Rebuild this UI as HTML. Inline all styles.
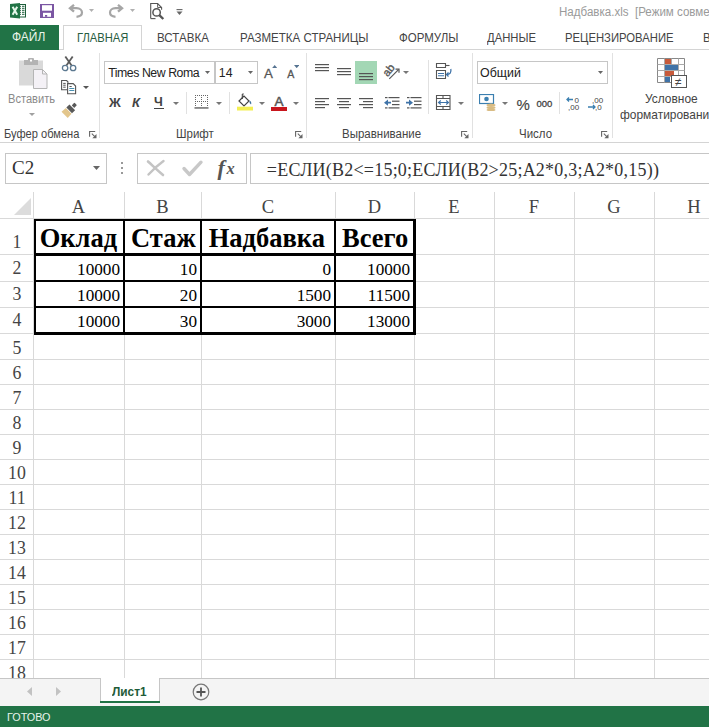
<!DOCTYPE html>
<html><head><meta charset="utf-8"><style>
html,body{margin:0;padding:0;width:709px;height:727px;overflow:hidden;background:#fff;position:relative}
.a{position:absolute;display:block}
.t{position:absolute;line-height:1;white-space:pre}
</style></head><body>
<svg class="a" style="left:10px;top:3px;" width="16" height="16" viewBox="0 0 16 16"><rect x="9.5" y="1.5" width="6" height="12.5" fill="#fff" stroke="#1d5e3a" stroke-width="1"/><path d="M9.5 3.3h1.5M12 3.3h2.5M9.5 5.3h1.5M12 5.3h2.5M9.5 7.3h1.5M12 7.3h2.5M9.5 9.3h1.5M12 9.3h2.5M9.5 11.3h1.5M12 11.3h2.5" stroke="#1d5e3a" stroke-width="1"/><path d="M0 1 L10 0 L10 15.5 L0 14.5Z" fill="#217346"/><path d="M2.6 3.8 L7.2 11.8 M7.2 3.8 L2.6 11.8" stroke="#e6f6ea" stroke-width="2"/></svg>
<svg class="a" style="left:40px;top:4px;" width="14" height="14" viewBox="0 0 14 14"><rect x="0" y="0" width="14" height="14" fill="#7b56a3"/><rect x="2" y="1.2" width="10" height="5.5" fill="#fff"/><rect x="3" y="8.8" width="8" height="4" fill="#fff"/><rect x="5" y="11" width="2.2" height="1.8" fill="#7b56a3"/></svg>
<svg class="a" style="left:66px;top:2px;" width="20" height="18" viewBox="0 0 20 18"><path d="M8 2.8 L4 6.2 L8 9.6" fill="none" stroke="#a6a6a6" stroke-width="2.4"/><path d="M4.5 6.2 H10.5 C14 6.2 16 8.2 16 10.5 C16 12.8 14 14.5 10.5 14.8" fill="none" stroke="#a6a6a6" stroke-width="2.2"/></svg>
<svg class="a" style="left:89px;top:9px;" width="5" height="3" viewBox="0 0 5 3"><path d="M0 0h5l-2.5 3z" fill="#b0b0b0"/></svg>
<svg class="a" style="left:106px;top:2px;" width="20" height="18" viewBox="0 0 20 18"><g transform="translate(20 0) scale(-1 1)"><path d="M8 2.8 L4 6.2 L8 9.6" fill="none" stroke="#a6a6a6" stroke-width="2.4"/><path d="M4.5 6.2 H10.5 C14 6.2 16 8.2 16 10.5 C16 12.8 14 14.5 10.5 14.8" fill="none" stroke="#a6a6a6" stroke-width="2.2"/></g></svg>
<svg class="a" style="left:130px;top:9px;" width="5" height="3" viewBox="0 0 5 3"><path d="M0 0h5l-2.5 3z" fill="#b0b0b0"/></svg>
<svg class="a" style="left:149px;top:2px;" width="17" height="18" viewBox="0 0 17 18"><path d="M1.7 16.6 V1.5 H8.6 L12.6 5.5 V7.8" fill="none" stroke="#555" stroke-width="1.1"/><path d="M1.7 16.6 H6.5" stroke="#555" stroke-width="1.1"/><path d="M8.6 1.5 V5.5 H12.6" fill="none" stroke="#555" stroke-width="0.9"/><circle cx="7.6" cy="10.4" r="3.7" fill="none" stroke="#555" stroke-width="1.5"/><path d="M10.3 13.1 L14.3 17" stroke="#555" stroke-width="2.3"/></svg>
<svg class="a" style="left:176px;top:8px;" width="7" height="8" viewBox="0 0 7 8"><path d="M0.5 1.6h6" stroke="#666" stroke-width="1.1"/><path d="M0.5 3.6h6l-3 3.4z" fill="#666"/></svg>
<div class="t" style="left:558.6px;top:6.35px;font-size:12.3px;font-family:'Liberation Sans',sans-serif;color:#9a9a9a;font-weight:normal;transform:scaleX(0.94);transform-origin:0 0;">Надбавка.xls&nbsp; [Режим совместимости] - Excel</div>
<div class="a" style="left:0px;top:49px;width:709px;height:1px;background:#d4d4d4"></div>
<div class="a" style="left:0px;top:25px;width:59px;height:25px;background:#217346"></div>
<div class="t" style="left:12.2px;top:31.48px;font-size:12.96px;font-family:'Liberation Sans',sans-serif;color:#eaf5ea;font-weight:normal;transform:scaleX(0.926);transform-origin:0 0;">ФАЙЛ</div>
<div class="a" style="left:63px;top:25px;width:79px;height:25px;background:#fff;border:1px solid #d4d4d4;border-bottom:none;box-sizing:border-box"></div>
<div class="t" style="left:77px;top:32.22px;font-size:12.1px;font-family:'Liberation Sans',sans-serif;color:#275c3e;font-weight:normal;transform:scaleX(0.926);transform-origin:0 0;">ГЛАВНАЯ</div>
<div class="t" style="left:157.4px;top:31.85px;font-size:12.53px;font-family:'Liberation Sans',sans-serif;color:#444;font-weight:normal;transform:scaleX(0.926);transform-origin:0 0;">ВСТАВКА</div>
<div class="t" style="left:239.7px;top:31.90px;font-size:12.47px;font-family:'Liberation Sans',sans-serif;color:#444;font-weight:normal;transform:scaleX(0.926);transform-origin:0 0;">РАЗМЕТКА СТРАНИЦЫ</div>
<div class="t" style="left:398.6px;top:31.94px;font-size:12.42px;font-family:'Liberation Sans',sans-serif;color:#444;font-weight:normal;transform:scaleX(0.926);transform-origin:0 0;">ФОРМУЛЫ</div>
<div class="t" style="left:486.7px;top:32.13px;font-size:12.2px;font-family:'Liberation Sans',sans-serif;color:#444;font-weight:normal;transform:scaleX(0.926);transform-origin:0 0;">ДАННЫЕ</div>
<div class="t" style="left:564.7px;top:32.13px;font-size:12.2px;font-family:'Liberation Sans',sans-serif;color:#444;font-weight:normal;transform:scaleX(0.926);transform-origin:0 0;">РЕЦЕНЗИРОВАНИЕ</div>
<div class="t" style="left:702.5px;top:31.94px;font-size:12.42px;font-family:'Liberation Sans',sans-serif;color:#444;font-weight:normal;transform:scaleX(0.926);transform-origin:0 0;">ВИД</div>
<div class="a" style="left:0px;top:142px;width:709px;height:1px;background:#d4d4d4"></div>
<div class="a" style="left:99px;top:53px;width:1px;height:85px;background:#e1e1e1"></div>
<div class="a" style="left:306px;top:53px;width:1px;height:85px;background:#e1e1e1"></div>
<div class="a" style="left:472px;top:53px;width:1px;height:85px;background:#e1e1e1"></div>
<div class="a" style="left:612px;top:53px;width:1px;height:85px;background:#e1e1e1"></div>
<div class="t" style="left:3.5px;top:128.41px;font-size:11.99px;font-family:'Liberation Sans',sans-serif;color:#444;font-weight:normal;transform:scaleX(0.926);transform-origin:0 0;">Буфер обмена</div>
<div class="t" style="left:175.8px;top:128.04px;font-size:12.42px;font-family:'Liberation Sans',sans-serif;color:#444;font-weight:normal;transform:scaleX(0.926);transform-origin:0 0;">Шрифт</div>
<div class="t" style="left:341.6px;top:128.04px;font-size:12.42px;font-family:'Liberation Sans',sans-serif;color:#444;font-weight:normal;transform:scaleX(0.926);transform-origin:0 0;">Выравнивание</div>
<div class="t" style="left:518.6px;top:128.04px;font-size:12.42px;font-family:'Liberation Sans',sans-serif;color:#444;font-weight:normal;transform:scaleX(0.926);transform-origin:0 0;">Число</div>
<svg class="a" style="left:89px;top:130px;" width="8" height="9" viewBox="0 0 8 9"><path d="M0.6 6.8 V1.5 H6.2" fill="none" stroke="#666" stroke-width="1.1"/><path d="M7.5 4 V8.2 H3.3 Z" fill="#666"/><path d="M2.8 3.6 L5.8 6.6" stroke="#666" stroke-width="1.1"/></svg>
<svg class="a" style="left:295px;top:130px;" width="8" height="9" viewBox="0 0 8 9"><path d="M0.6 6.8 V1.5 H6.2" fill="none" stroke="#666" stroke-width="1.1"/><path d="M7.5 4 V8.2 H3.3 Z" fill="#666"/><path d="M2.8 3.6 L5.8 6.6" stroke="#666" stroke-width="1.1"/></svg>
<svg class="a" style="left:461px;top:130px;" width="8" height="9" viewBox="0 0 8 9"><path d="M0.6 6.8 V1.5 H6.2" fill="none" stroke="#666" stroke-width="1.1"/><path d="M7.5 4 V8.2 H3.3 Z" fill="#666"/><path d="M2.8 3.6 L5.8 6.6" stroke="#666" stroke-width="1.1"/></svg>
<svg class="a" style="left:601px;top:130px;" width="8" height="9" viewBox="0 0 8 9"><path d="M0.6 6.8 V1.5 H6.2" fill="none" stroke="#666" stroke-width="1.1"/><path d="M7.5 4 V8.2 H3.3 Z" fill="#666"/><path d="M2.8 3.6 L5.8 6.6" stroke="#666" stroke-width="1.1"/></svg>
<svg class="a" style="left:18px;top:57px;" width="31" height="32" viewBox="0 0 31 32"><rect x="1" y="3.5" width="24" height="25" fill="#d9d9d9"/><rect x="6" y="3" width="14" height="5" fill="#b3b3b3"/><rect x="10" y="1" width="6" height="4" rx="1" fill="#b3b3b3"/><rect x="12" y="2.5" width="2" height="2" fill="#fff"/><path d="M15.5 12.5h9l4.5 4.5v14.5h-13.5z" fill="#f4f1f6" stroke="#b5b5b5" stroke-width="1"/><path d="M24.5 12.5v4.5h4.5" fill="none" stroke="#b5b5b5"/></svg>
<div class="t" style="left:7.6px;top:92.80px;font-size:12px;font-family:'Liberation Sans',sans-serif;color:#8a8a8a;font-weight:normal;transform:scaleX(0.926);transform-origin:0 0;">Вставить</div>
<svg class="a" style="left:29px;top:113px;" width="6" height="3" viewBox="0 0 6 3"><path d="M0 0h6l-3 3z" fill="#a0a0a0"/></svg>
<svg class="a" style="left:61px;top:56px;" width="16" height="16" viewBox="0 0 16 16"><path d="M4.3 0.6 L10.6 9.6" stroke="#5b5b5b" stroke-width="1.8"/><path d="M11.7 0.6 L5.4 9.6" stroke="#5b5b5b" stroke-width="1.8"/><circle cx="4.1" cy="12" r="2.7" fill="none" stroke="#5b7890" stroke-width="1.3"/><circle cx="12.1" cy="12" r="2.7" fill="none" stroke="#5b7890" stroke-width="1.3"/></svg>
<svg class="a" style="left:60px;top:79px;" width="17" height="16" viewBox="0 0 17 16"><path d="M1.6 1.5h5l1.3 1.3v8h-6.3z" fill="#fff" stroke="#555" stroke-width="1.1"/><path d="M3.2 4.4h2.5M3.2 6.2h2.5M3.2 8.2h2.5" stroke="#555" stroke-width="1"/><path d="M7.6 4.6h5.6l2.4 2.4v7.8h-8z" fill="#fff" stroke="#555" stroke-width="1.1"/><path d="M9.5 7.5h2.2" stroke="#555" stroke-width="1"/><path d="M9.3 9.5h5M9.3 11.5h5" stroke="#4a8fb0" stroke-width="1.1"/></svg>
<svg class="a" style="left:83px;top:86px;" width="6" height="3" viewBox="0 0 6 3"><path d="M0 0h6l-3 3z" fill="#555"/></svg>
<svg class="a" style="left:56px;top:98px;" width="28" height="22" viewBox="0 0 28 22"><g transform="translate(13.6 12) rotate(45)"><rect x="-1.8" y="-8.6" width="3.6" height="3.8" rx="0.6" fill="#595959"/><rect x="-4" y="-3.8" width="8" height="4.4" fill="#595959"/><path d="M-4 1.3 H4 L4.4 7 H-4.4Z" fill="#e3c68c"/></g></svg>
<div class="a" style="left:104px;top:61px;width:111px;height:23px;border:1px solid #c6c6c6;box-sizing:border-box;background:#fff"></div>
<div class="a" style="left:215px;top:61px;width:43px;height:23px;border:1px solid #c6c6c6;box-sizing:border-box;background:#fff"></div>
<div class="t" style="left:108.2px;top:66.55px;font-size:12.3px;font-family:'Liberation Sans',sans-serif;color:#222;font-weight:normal;letter-spacing:-0.45px;">Times New Roma</div>
<div class="t" style="left:218.8px;top:66.55px;font-size:12.3px;font-family:'Liberation Sans',sans-serif;color:#222;font-weight:normal;">14</div>
<svg class="a" style="left:205px;top:71px;" width="5" height="3" viewBox="0 0 5 3"><path d="M0 0h5l-2.5 3z" fill="#666"/></svg>
<svg class="a" style="left:248px;top:71px;" width="5" height="3" viewBox="0 0 5 3"><path d="M0 0h5l-2.5 3z" fill="#666"/></svg>
<div class="t" style="left:264px;top:66.90px;font-size:13.3px;font-family:'Liberation Sans',sans-serif;color:#555;font-weight:normal;-webkit-text-stroke:0.3px #555;">A</div>
<svg class="a" style="left:271.8px;top:64.5px;" width="5.4" height="3.2" viewBox="0 0 5.4 3.2"><path d="M0 3.2h5.4l-2.7-3.2z" fill="#557391"/></svg>
<div class="t" style="left:287.2px;top:68.99px;font-size:10.6px;font-family:'Liberation Sans',sans-serif;color:#555;font-weight:normal;-webkit-text-stroke:0.3px #555;">A</div>
<svg class="a" style="left:293.8px;top:64.8px;" width="5.4" height="3.2" viewBox="0 0 5.4 3.2"><path d="M0 0h5.4l-2.7 3.2z" fill="#557391"/></svg>
<div class="t" style="left:109px;top:96.35px;font-size:13px;font-family:'Liberation Sans',sans-serif;color:#444;font-weight:bold;">Ж</div>
<div class="t" style="left:132px;top:96.35px;font-size:13px;font-family:'Liberation Sans',sans-serif;color:#444;font-weight:bold;font-style:italic;">К</div>
<div class="t" style="left:154px;top:95.58px;font-size:12.5px;font-family:'Liberation Sans',sans-serif;color:#444;font-weight:bold;">Ч</div>
<div class="a" style="left:154px;top:108px;width:10px;height:1.3px;background:#444"></div>
<svg class="a" style="left:173px;top:102px;" width="6" height="3" viewBox="0 0 6 3"><path d="M0 0h6l-3 3z" fill="#777"/></svg>
<div class="a" style="left:186px;top:92px;width:1px;height:22px;background:#e1e1e1"></div>
<svg class="a" style="left:194px;top:94px;" width="15" height="16" viewBox="0 0 15 16"><g fill="#666"><rect x="1" y="1" width="1" height="1"/><rect x="3" y="1" width="1" height="1"/><rect x="5" y="1" width="1" height="1"/><rect x="7" y="1" width="1" height="1"/><rect x="9" y="1" width="1" height="1"/><rect x="11" y="1" width="1" height="1"/><rect x="13" y="1" width="1" height="1"/><rect x="1" y="7" width="1" height="1"/><rect x="3" y="7" width="1" height="1"/><rect x="5" y="7" width="1" height="1"/><rect x="7" y="7" width="1" height="1"/><rect x="9" y="7" width="1" height="1"/><rect x="11" y="7" width="1" height="1"/><rect x="13" y="7" width="1" height="1"/><rect x="1" y="3" width="1" height="1"/><rect x="1" y="5" width="1" height="1"/><rect x="1" y="9" width="1" height="1"/><rect x="1" y="11" width="1" height="1"/><rect x="7" y="3" width="1" height="1"/><rect x="7" y="5" width="1" height="1"/><rect x="7" y="9" width="1" height="1"/><rect x="7" y="11" width="1" height="1"/><rect x="13" y="3" width="1" height="1"/><rect x="13" y="5" width="1" height="1"/><rect x="13" y="9" width="1" height="1"/><rect x="13" y="11" width="1" height="1"/></g><rect x="0.5" y="13.3" width="14" height="1.3" fill="#555"/></svg>
<svg class="a" style="left:216px;top:102px;" width="6" height="3" viewBox="0 0 6 3"><path d="M0 0h6l-3 3z" fill="#777"/></svg>
<div class="a" style="left:229px;top:92px;width:1px;height:22px;background:#e1e1e1"></div>
<svg class="a" style="left:236px;top:93px;" width="18" height="18" viewBox="0 0 18 18"><path d="M8 3 L3 8 L8 13 L13 8 Z" fill="#fff" stroke="#444" stroke-width="1.2"/><path d="M6.3 1 V6" stroke="#444" stroke-width="1.1"/><path d="M6.3 1 h1.5" stroke="#444" stroke-width="1"/><path d="M13.5 7.5 q2.5 1.5 1.5 4 q-2 -1 -1.5 -4z" fill="#3b6f9a"/><rect x="1" y="13.7" width="16" height="3.8" fill="#f3ef52"/></svg>
<svg class="a" style="left:259px;top:102px;" width="6" height="3" viewBox="0 0 6 3"><path d="M0 0h6l-3 3z" fill="#777"/></svg>
<div class="t" style="left:274.6px;top:95.33px;font-size:13.5px;font-family:'Liberation Sans',sans-serif;color:#555;font-weight:normal;-webkit-text-stroke:0.5px #555;">A</div>
<div class="a" style="left:271px;top:106.7px;width:16px;height:4px;background:#c8161d"></div>
<svg class="a" style="left:293px;top:102px;" width="6" height="3" viewBox="0 0 6 3"><path d="M0 0h6l-3 3z" fill="#777"/></svg>
<svg class="a" style="left:315px;top:64px;" width="16" height="11" viewBox="0 0 16 11"><rect x="0" y="0" width="14" height="1.2" fill="#555"/><rect x="0" y="3" width="14" height="1.2" fill="#555"/><rect x="0" y="6" width="14" height="1.2" fill="#555"/></svg>
<svg class="a" style="left:337px;top:68px;" width="16" height="11" viewBox="0 0 16 11"><rect x="0" y="0" width="14" height="1.2" fill="#555"/><rect x="0" y="3" width="14" height="1.2" fill="#555"/><rect x="0" y="6" width="14" height="1.2" fill="#555"/></svg>
<div class="a" style="left:355px;top:61px;width:22px;height:23px;background:#a3d7b5"></div>
<svg class="a" style="left:359px;top:73px;" width="16" height="11" viewBox="0 0 16 11"><rect x="0" y="0" width="14" height="1.2" fill="#555"/><rect x="0" y="3" width="14" height="1.2" fill="#555"/><rect x="0" y="6" width="14" height="1.2" fill="#555"/></svg>
<svg class="a" style="left:381px;top:61px;" width="22" height="20" viewBox="0 0 22 20"><text x="0" y="0" font-family="Liberation Sans" font-size="11" fill="#555" stroke="#555" stroke-width="0.35" transform="translate(6.8 16.2) rotate(-52)">ab</text><path d="M8.3 17.8 L17.5 8.6" stroke="#555" stroke-width="1.2"/><path d="M14.5 8.2 H18 V11.7" fill="none" stroke="#555" stroke-width="1.2"/></svg>
<svg class="a" style="left:403px;top:71px;" width="6" height="3" viewBox="0 0 6 3"><path d="M0 0h6l-3 3z" fill="#777"/></svg>
<svg class="a" style="left:315px;top:98px;" width="16" height="14" viewBox="0 0 16 14"><rect x="0" y="0" width="14" height="1.2" fill="#555"/><rect x="0" y="3" width="10" height="1.2" fill="#555"/><rect x="0" y="6" width="14" height="1.2" fill="#555"/><rect x="0" y="9" width="10" height="1.2" fill="#555"/></svg>
<svg class="a" style="left:337px;top:98px;" width="16" height="14" viewBox="0 0 16 14"><rect x="0" y="0" width="14" height="1.2" fill="#555"/><rect x="2" y="3" width="10" height="1.2" fill="#555"/><rect x="0" y="6" width="14" height="1.2" fill="#555"/><rect x="2" y="9" width="10" height="1.2" fill="#555"/></svg>
<svg class="a" style="left:359px;top:98px;" width="16" height="14" viewBox="0 0 16 14"><rect x="0" y="0" width="14" height="1.2" fill="#555"/><rect x="4" y="3" width="10" height="1.2" fill="#555"/><rect x="0" y="6" width="14" height="1.2" fill="#555"/><rect x="4" y="9" width="10" height="1.2" fill="#555"/></svg>
<svg class="a" style="left:383px;top:96px;" width="18" height="13" viewBox="0 0 18 13"><g fill="#555"><rect x="2" y="1" width="2.5" height="1.2"/><rect x="5.5" y="1" width="11" height="1.2"/><rect x="9" y="4.6" width="7.5" height="1.2"/><rect x="9" y="8" width="7.5" height="1.2"/><rect x="2" y="11.3" width="2.5" height="1.2"/><rect x="5.5" y="11.3" width="11" height="1.2"/></g><path d="M1 6.7 L5 3.6 V5.8 H8 V7.6 H5 V9.8Z" fill="#3f73a8"/></svg>
<svg class="a" style="left:405px;top:96px;" width="18" height="13" viewBox="0 0 18 13"><g fill="#555"><rect x="2" y="1" width="2.5" height="1.2"/><rect x="5.5" y="1" width="11" height="1.2"/><rect x="9" y="4.6" width="7.5" height="1.2"/><rect x="9" y="8" width="7.5" height="1.2"/><rect x="2" y="11.3" width="2.5" height="1.2"/><rect x="5.5" y="11.3" width="11" height="1.2"/></g><path d="M8 6.7 L4 3.6 V5.8 H1 V7.6 H4 V9.8Z" fill="#3f73a8"/></svg>
<div class="a" style="left:428px;top:60px;width:1px;height:54px;background:#e1e1e1"></div>
<svg class="a" style="left:434px;top:62px;" width="20" height="18" viewBox="0 0 20 18"><path d="M2.5 1.5h9v4h-9z" fill="none" stroke="#555" stroke-width="1.1"/><path d="M11.5 3.5h4" stroke="#555" stroke-width="1.1"/><path d="M2.5 8.5h9v8h-9z" fill="none" stroke="#555" stroke-width="1.1"/><path d="M4 11.5h6M4 13.8h6" stroke="#3f73a8" stroke-width="1.1"/><path d="M16.8 7 C17.5 10.5 16 12.5 12.5 12.5 M14.5 10.5 L12.5 12.5 L14.5 14.5" fill="none" stroke="#3f73a8" stroke-width="1.3"/></svg>
<svg class="a" style="left:435px;top:94px;" width="17" height="17" viewBox="0 0 17 17"><path d="M1.5 1.5h13.5v14h-13.5z" fill="none" stroke="#555" stroke-width="1.1"/><path d="M1.5 4.5h13.5M1.5 12.5h13.5M8 1.5v3M8 12.5v3" stroke="#555" stroke-width="1.1"/><path d="M3.5 8.5h10M5.8 6.5l-2.3 2 2.3 2M11.2 6.5l2.3 2-2.3 2" fill="none" stroke="#3f73a8" stroke-width="1.1"/></svg>
<svg class="a" style="left:458px;top:102px;" width="6" height="3" viewBox="0 0 6 3"><path d="M0 0h6l-3 3z" fill="#777"/></svg>
<div class="t" style="left:461px;top:-0.85px;font-size:1px;font-family:'Liberation Sans',sans-serif;color:#444;font-weight:normal;"></div>
<div class="a" style="left:477px;top:61px;width:131px;height:23px;border:1px solid #c6c6c6;box-sizing:border-box;background:#fff"></div>
<div class="t" style="left:480.4px;top:65.61px;font-size:13.4px;font-family:'Liberation Sans',sans-serif;color:#222;font-weight:normal;transform:scaleX(0.926);transform-origin:0 0;">Общий</div>
<svg class="a" style="left:598px;top:71px;" width="5" height="3" viewBox="0 0 5 3"><path d="M0 0h5l-2.5 3z" fill="#666"/></svg>
<svg class="a" style="left:479px;top:94px;" width="18" height="17" viewBox="0 0 18 17"><rect x=".5" y=".5" width="14" height="9" fill="#fff" stroke="#3b7fb0" stroke-width="1.2"/><circle cx="7.5" cy="5" r="2.3" fill="#3b7fb0"/><ellipse cx="12" cy="11" rx="4.5" ry="1.6" fill="#d9bc84"/><ellipse cx="12" cy="13.5" rx="4.5" ry="1.6" fill="#d9bc84"/><ellipse cx="12" cy="16" rx="4.5" ry="1.2" fill="#d9bc84"/></svg>
<svg class="a" style="left:502px;top:102px;" width="6" height="3" viewBox="0 0 6 3"><path d="M0 0h6l-3 3z" fill="#777"/></svg>
<div class="t" style="left:516.5px;top:96.85px;font-size:15px;font-family:'Liberation Sans',sans-serif;color:#444;font-weight:normal;-webkit-text-stroke:0.15px #444;">%</div>
<div class="t" style="left:536.5px;top:98.52px;font-size:9.5px;font-family:'Liberation Sans',sans-serif;color:#444;font-weight:normal;-webkit-text-stroke:0.3px #444;">000</div>
<div class="a" style="left:559px;top:92px;width:1px;height:22px;background:#e1e1e1"></div>
<svg class="a" style="left:566px;top:96px;" width="16" height="15" viewBox="0 0 16 15"><path d="M7 3.5H1 M3 1.5L1 3.5 3 5.5" fill="none" stroke="#3b7fb0" stroke-width="1.3"/><text x="8.5" y="7" font-family="Liberation Sans" font-size="8" fill="#444">0</text><text x="2" y="14" font-family="Liberation Sans" font-size="8" fill="#444">,00</text></svg>
<svg class="a" style="left:588px;top:96px;" width="16" height="15" viewBox="0 0 16 15"><text x="4" y="7" font-family="Liberation Sans" font-size="8" fill="#444">,00</text><path d="M0 11H7 M5 9L7 11 5 13" fill="none" stroke="#3b7fb0" stroke-width="1.3"/><text x="7" y="14" font-family="Liberation Sans" font-size="8" fill="#444">,0</text></svg>
<svg class="a" style="left:656px;top:57px;" width="32" height="32" viewBox="0 0 32 32"><path d="M1.5 1.5h27v24h-27z" fill="#fff" stroke="#888"/><path d="M1.5 7.5h27M1.5 13.5h27M1.5 19.5h27M8.5 1.5v24M15.5 1.5v24M22.5 1.5v24" stroke="#aaa"/><rect x="9" y="2" width="6" height="5" fill="#c85a3a"/><rect x="9" y="8" width="13" height="5" fill="#3f73a8"/><rect x="9" y="14" width="9" height="5" fill="#c85a3a"/><rect x="9" y="20" width="5" height="5" fill="#3f73a8"/><rect x="15.5" y="18.5" width="15" height="12" fill="#fff" stroke="#555"/><text x="19" y="29" font-family="Liberation Sans" font-size="12" fill="#444">≠</text></svg>
<div class="t" style="left:645.4px;top:92.83px;font-size:12.9px;font-family:'Liberation Sans',sans-serif;color:#444;font-weight:normal;transform:scaleX(0.926);transform-origin:0 0;">Условное</div>
<div class="t" style="left:620px;top:109.03px;font-size:12.9px;font-family:'Liberation Sans',sans-serif;color:#444;font-weight:normal;transform:scaleX(0.926);transform-origin:0 0;">форматировани</div>
<div class="a" style="left:5px;top:153px;width:102px;height:31px;border:1px solid #c6c6c6;box-sizing:border-box;background:#fff"></div>
<div class="t" style="left:12px;top:157.83px;font-size:19px;font-family:'Liberation Serif',serif;color:#333;font-weight:normal;">C2</div>
<svg class="a" style="left:93px;top:166px;" width="7" height="4" viewBox="0 0 7 4"><path d="M0 0h7l-3.5 4z" fill="#666"/></svg>
<div class="a" style="left:121px;top:162px;width:2px;height:2px;background:#999"></div>
<div class="a" style="left:121px;top:167px;width:2px;height:2px;background:#999"></div>
<div class="a" style="left:121px;top:172px;width:2px;height:2px;background:#999"></div>
<div class="a" style="left:137px;top:153px;width:110px;height:31px;border:1px solid #c6c6c6;box-sizing:border-box;background:#fff"></div>
<svg class="a" style="left:145px;top:158px;" width="22" height="20" viewBox="0 0 22 20"><path d="M3 3.5 C8 8 12 12 18 17" fill="none" stroke="#c4c4c4" stroke-width="2.6" stroke-linecap="round"/><path d="M18.5 3 C13 7 8 11.5 3.5 16.5" fill="none" stroke="#c4c4c4" stroke-width="2.4" stroke-linecap="round"/></svg>
<svg class="a" style="left:181px;top:159px;" width="23" height="19" viewBox="0 0 23 19"><path d="M3 9.5 L8.5 15.5 L20 3.2" fill="none" stroke="#c8c8c8" stroke-width="3.4" stroke-linejoin="round" stroke-linecap="round"/></svg>
<div class="t" style="left:217.5px;top:157.24px;font-size:22px;font-family:'Liberation Serif',serif;color:#555;font-weight:bold;font-style:italic;">f</div>
<div class="t" style="left:226.5px;top:160.50px;font-size:16.5px;font-family:'Liberation Serif',serif;color:#555;font-weight:bold;font-style:italic;">x</div>
<div class="a" style="left:250px;top:153px;width:470px;height:31px;border:1px solid #c6c6c6;box-sizing:border-box;background:#fff"></div>
<div class="t" style="left:266.8px;top:160.86px;font-size:18px;font-family:'Liberation Serif',serif;color:#333;font-weight:normal;letter-spacing:0.22px;">=ЕСЛИ(B2&lt;=15;0;ЕСЛИ(B2&gt;25;A2*0,3;A2*0,15))</div>
<div class="a" style="left:33px;top:192px;width:1px;height:486px;background:#d9d9d9"></div>
<div class="a" style="left:124px;top:192px;width:1px;height:486px;background:#d9d9d9"></div>
<div class="a" style="left:201px;top:192px;width:1px;height:486px;background:#d9d9d9"></div>
<div class="a" style="left:335px;top:192px;width:1px;height:486px;background:#d9d9d9"></div>
<div class="a" style="left:414px;top:192px;width:1px;height:486px;background:#d9d9d9"></div>
<div class="a" style="left:494px;top:192px;width:1px;height:486px;background:#d9d9d9"></div>
<div class="a" style="left:574px;top:192px;width:1px;height:486px;background:#d9d9d9"></div>
<div class="a" style="left:654px;top:192px;width:1px;height:486px;background:#d9d9d9"></div>
<div class="a" style="left:0px;top:218px;width:709px;height:1px;background:#d9d9d9"></div>
<div class="a" style="left:0px;top:254px;width:709px;height:1px;background:#d9d9d9"></div>
<div class="a" style="left:0px;top:281px;width:709px;height:1px;background:#d9d9d9"></div>
<div class="a" style="left:0px;top:307px;width:709px;height:1px;background:#d9d9d9"></div>
<div class="a" style="left:0px;top:333px;width:709px;height:1px;background:#d9d9d9"></div>
<div class="a" style="left:0px;top:359px;width:709px;height:1px;background:#d9d9d9"></div>
<div class="a" style="left:0px;top:384px;width:709px;height:1px;background:#d9d9d9"></div>
<div class="a" style="left:0px;top:409px;width:709px;height:1px;background:#d9d9d9"></div>
<div class="a" style="left:0px;top:434px;width:709px;height:1px;background:#d9d9d9"></div>
<div class="a" style="left:0px;top:459px;width:709px;height:1px;background:#d9d9d9"></div>
<div class="a" style="left:0px;top:484px;width:709px;height:1px;background:#d9d9d9"></div>
<div class="a" style="left:0px;top:509px;width:709px;height:1px;background:#d9d9d9"></div>
<div class="a" style="left:0px;top:534px;width:709px;height:1px;background:#d9d9d9"></div>
<div class="a" style="left:0px;top:559px;width:709px;height:1px;background:#d9d9d9"></div>
<div class="a" style="left:0px;top:584px;width:709px;height:1px;background:#d9d9d9"></div>
<div class="a" style="left:0px;top:609px;width:709px;height:1px;background:#d9d9d9"></div>
<div class="a" style="left:0px;top:634px;width:709px;height:1px;background:#d9d9d9"></div>
<div class="a" style="left:0px;top:659px;width:709px;height:1px;background:#d9d9d9"></div>
<svg class="a" style="left:14px;top:198px;" width="17" height="17" viewBox="0 0 17 17"><path d="M17 0 V17 H0 Z" fill="#dcdcdc"/></svg>
<div class="t" style="left:33px;width:91px;text-align:center;top:198.25px;font-size:18.5px;font-family:'Liberation Serif',serif;color:#444">A</div>
<div class="t" style="left:124px;width:77px;text-align:center;top:198.25px;font-size:18.5px;font-family:'Liberation Serif',serif;color:#444">B</div>
<div class="t" style="left:201px;width:134px;text-align:center;top:198.25px;font-size:18.5px;font-family:'Liberation Serif',serif;color:#444">C</div>
<div class="t" style="left:335px;width:79px;text-align:center;top:198.25px;font-size:18.5px;font-family:'Liberation Serif',serif;color:#444">D</div>
<div class="t" style="left:414px;width:80px;text-align:center;top:198.25px;font-size:18.5px;font-family:'Liberation Serif',serif;color:#444">E</div>
<div class="t" style="left:494px;width:80px;text-align:center;top:198.25px;font-size:18.5px;font-family:'Liberation Serif',serif;color:#444">F</div>
<div class="t" style="left:574px;width:80px;text-align:center;top:198.25px;font-size:18.5px;font-family:'Liberation Serif',serif;color:#444">G</div>
<div class="t" style="left:654px;width:80px;text-align:center;top:198.25px;font-size:18.5px;font-family:'Liberation Serif',serif;color:#444">H</div>
<div class="t" style="left:0px;width:34px;text-align:center;top:233.63px;font-size:17.8px;font-family:'Liberation Serif',serif;color:#444">1</div>
<div class="t" style="left:0px;width:34px;text-align:center;top:260.33px;font-size:17.8px;font-family:'Liberation Serif',serif;color:#444">2</div>
<div class="t" style="left:0px;width:34px;text-align:center;top:286.33px;font-size:17.8px;font-family:'Liberation Serif',serif;color:#444">3</div>
<div class="t" style="left:0px;width:34px;text-align:center;top:312.33px;font-size:17.8px;font-family:'Liberation Serif',serif;color:#444">4</div>
<div class="t" style="left:0px;width:34px;text-align:center;top:339.53px;font-size:17.8px;font-family:'Liberation Serif',serif;color:#444">5</div>
<div class="t" style="left:0px;width:34px;text-align:center;top:364.53px;font-size:17.8px;font-family:'Liberation Serif',serif;color:#444">6</div>
<div class="t" style="left:0px;width:34px;text-align:center;top:389.53px;font-size:17.8px;font-family:'Liberation Serif',serif;color:#444">7</div>
<div class="t" style="left:0px;width:34px;text-align:center;top:414.53px;font-size:17.8px;font-family:'Liberation Serif',serif;color:#444">8</div>
<div class="t" style="left:0px;width:34px;text-align:center;top:439.53px;font-size:17.8px;font-family:'Liberation Serif',serif;color:#444">9</div>
<div class="t" style="left:0px;width:34px;text-align:center;top:464.53px;font-size:17.8px;font-family:'Liberation Serif',serif;color:#444">10</div>
<div class="t" style="left:0px;width:34px;text-align:center;top:489.53px;font-size:17.8px;font-family:'Liberation Serif',serif;color:#444">11</div>
<div class="t" style="left:0px;width:34px;text-align:center;top:514.53px;font-size:17.8px;font-family:'Liberation Serif',serif;color:#444">12</div>
<div class="t" style="left:0px;width:34px;text-align:center;top:539.53px;font-size:17.8px;font-family:'Liberation Serif',serif;color:#444">13</div>
<div class="t" style="left:0px;width:34px;text-align:center;top:564.53px;font-size:17.8px;font-family:'Liberation Serif',serif;color:#444">14</div>
<div class="t" style="left:0px;width:34px;text-align:center;top:589.53px;font-size:17.8px;font-family:'Liberation Serif',serif;color:#444">15</div>
<div class="t" style="left:0px;width:34px;text-align:center;top:614.53px;font-size:17.8px;font-family:'Liberation Serif',serif;color:#444">16</div>
<div class="t" style="left:0px;width:34px;text-align:center;top:639.53px;font-size:17.8px;font-family:'Liberation Serif',serif;color:#444">17</div>
<div class="t" style="left:0px;width:34px;text-align:center;top:664.53px;font-size:17.8px;font-family:'Liberation Serif',serif;color:#444">18</div>
<div class="a" style="left:34px;top:219px;width:2px;height:116px;background:#000"></div>
<div class="a" style="left:123px;top:219px;width:2px;height:116px;background:#000"></div>
<div class="a" style="left:200px;top:219px;width:2px;height:116px;background:#000"></div>
<div class="a" style="left:334px;top:219px;width:2px;height:116px;background:#000"></div>
<div class="a" style="left:413px;top:219px;width:3px;height:116px;background:#000"></div>
<div class="a" style="left:34px;top:219px;width:382px;height:2px;background:#000"></div>
<div class="a" style="left:34px;top:253px;width:382px;height:3px;background:#000"></div>
<div class="a" style="left:34px;top:280px;width:382px;height:2px;background:#000"></div>
<div class="a" style="left:34px;top:306px;width:382px;height:2px;background:#000"></div>
<div class="a" style="left:34px;top:332px;width:382px;height:3px;background:#000"></div>
<div class="t" style="left:39.7px;top:224.91px;font-size:26.5px;font-family:'Liberation Serif',serif;color:#000;font-weight:bold;">Оклад</div>
<div class="t" style="left:131px;top:224.91px;font-size:26.5px;font-family:'Liberation Serif',serif;color:#000;font-weight:bold;">Стаж</div>
<div class="t" style="left:208.7px;top:224.91px;font-size:26.5px;font-family:'Liberation Serif',serif;color:#000;font-weight:bold;">Надбавка</div>
<div class="t" style="left:342px;top:224.91px;font-size:26.5px;font-family:'Liberation Serif',serif;color:#000;font-weight:bold;">Всего</div>
<div class="t" style="left:20px;width:100px;text-align:right;top:261.02px;font-size:17.2px;font-family:'Liberation Serif',serif;color:#000">10000</div>
<div class="t" style="left:97px;width:100px;text-align:right;top:261.02px;font-size:17.2px;font-family:'Liberation Serif',serif;color:#000">10</div>
<div class="t" style="left:231px;width:100px;text-align:right;top:261.02px;font-size:17.2px;font-family:'Liberation Serif',serif;color:#000">0</div>
<div class="t" style="left:310px;width:100px;text-align:right;top:261.02px;font-size:17.2px;font-family:'Liberation Serif',serif;color:#000">10000</div>
<div class="t" style="left:20px;width:100px;text-align:right;top:287.22px;font-size:17.2px;font-family:'Liberation Serif',serif;color:#000">10000</div>
<div class="t" style="left:97px;width:100px;text-align:right;top:287.22px;font-size:17.2px;font-family:'Liberation Serif',serif;color:#000">20</div>
<div class="t" style="left:231px;width:100px;text-align:right;top:287.22px;font-size:17.2px;font-family:'Liberation Serif',serif;color:#000">1500</div>
<div class="t" style="left:310px;width:100px;text-align:right;top:287.22px;font-size:17.2px;font-family:'Liberation Serif',serif;color:#000">11500</div>
<div class="t" style="left:20px;width:100px;text-align:right;top:313.22px;font-size:17.2px;font-family:'Liberation Serif',serif;color:#000">10000</div>
<div class="t" style="left:97px;width:100px;text-align:right;top:313.22px;font-size:17.2px;font-family:'Liberation Serif',serif;color:#000">30</div>
<div class="t" style="left:231px;width:100px;text-align:right;top:313.22px;font-size:17.2px;font-family:'Liberation Serif',serif;color:#000">3000</div>
<div class="t" style="left:310px;width:100px;text-align:right;top:313.22px;font-size:17.2px;font-family:'Liberation Serif',serif;color:#000">13000</div>
<div class="a" style="left:0px;top:678px;width:709px;height:28px;background:#f4f4f4"></div>
<div class="a" style="left:0px;top:678px;width:709px;height:1px;background:#c6c6c6"></div>
<svg class="a" style="left:27px;top:687px;" width="5" height="9" viewBox="0 0 5 9"><path d="M5 0v9L0 4.5z" fill="#c2c2c2"/></svg>
<svg class="a" style="left:56px;top:687px;" width="5" height="9" viewBox="0 0 5 9"><path d="M0 0v9L5 4.5z" fill="#c2c2c2"/></svg>
<div class="a" style="left:100px;top:678px;width:60px;height:25px;background:#fff;border-left:1px solid #c6c6c6;border-right:1px solid #c6c6c6;box-sizing:border-box"></div>
<div class="a" style="left:100px;top:701px;width:60px;height:2px;background:#217346"></div>
<div class="t" style="left:112px;top:684.68px;font-size:13.2px;font-family:'Liberation Sans',sans-serif;color:#1e5b38;font-weight:bold;transform:scaleX(0.9);transform-origin:0 0;">Лист1</div>
<svg class="a" style="left:192px;top:683px;" width="18" height="18" viewBox="0 0 18 18"><circle cx="9" cy="9" r="7.8" fill="none" stroke="#777" stroke-width="1.2"/><path d="M9 4.5v9M4.5 9h9" stroke="#555" stroke-width="1.8"/></svg>
<div class="a" style="left:0px;top:706px;width:709px;height:21px;background:#217346"></div>
<div class="t" style="left:7.1px;top:711.05px;font-size:11.7px;font-family:'Liberation Sans',sans-serif;color:#e8f4ea;font-weight:normal;transform:scaleX(0.926);transform-origin:0 0;">ГОТОВО</div>
</body></html>
